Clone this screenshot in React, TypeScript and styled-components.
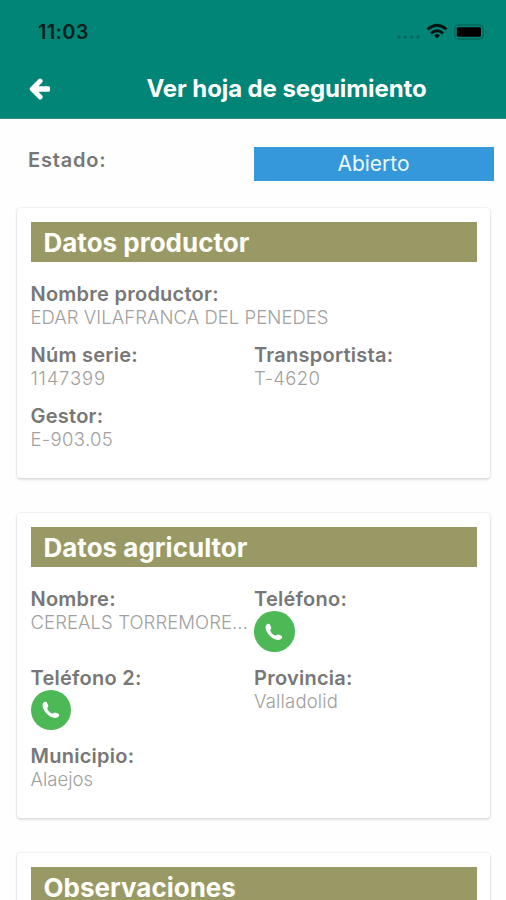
import React from "react";
import styled, { createGlobalStyle } from "styled-components";

const GlobalStyle = createGlobalStyle`
  * { box-sizing: border-box; }
  html, body { margin: 0; background: #fefefe; }
  body { font-family: Inter, "Liberation Sans", sans-serif; height: 900px; overflow: hidden; }
`;

const Screen = styled.div`
  width: 506px;
  height: 900px;
  overflow: hidden;
  background: #fefefe;
`;

const Header = styled.header`
  height: 118.5px;
  background: #018577;
  border-bottom: 1px solid #35897f;
`;

const StatusBar = styled.div`
  display: flex;
  align-items: center;
  justify-content: space-between;
  height: 60px;
  padding: 3px 18px 0 38px;
`;

const Clock = styled.span`
  color: #04201d;
  font-size: 20px;
  font-weight: 600;
  letter-spacing: 0.3px;
`;

const StatusIcons = styled.svg`
  display: block;
  width: 92px;
  height: 20px;
`;

const NavBar = styled.div`
  display: grid;
  grid-template-columns: 68px 1fr;
  align-items: center;
  height: 57px;
`;

const BackIcon = styled.svg`
  display: block;
  width: 22px;
  height: 22px;
  margin-left: 29px;
`;

const Title = styled.h1`
  margin: 0;
  padding-left: 78.5px;
  color: #fff;
  font-size: 24px;
  font-weight: 700;
  line-height: 30px;
  letter-spacing: -0.1px;
  white-space: nowrap;
`;

const StateRow = styled.div`
  display: grid;
  grid-template-columns: 225.5px 240px;
  padding: 28px 0 0 28px;
  height: 89px;
`;

const StateLabel = styled.div`
  color: #777;
  font-size: 20px;
  font-weight: 600;
  line-height: 26px;
  letter-spacing: 0.8px;
`;

const StateBadge = styled.div`
  height: 34px;
  background: #3498db;
  color: #eef8ff;
  font-size: 21px;
  line-height: 34px;
  text-align: center;
`;

const Card = styled.section`
  width: 473px;
  margin: 0 0 35px 17px;
  padding: 14px 13px 13.5px 13.5px;
  background: #fff;
  border-radius: 3px;
  box-shadow: 0 0 2px rgba(0, 0, 0, 0.18), 0 2px 3px rgba(0, 0, 0, 0.1);
`;

const CardTitle = styled.h2`
  height: 40.5px;
  margin: 0 0 20px;
  padding-left: 13px;
  background: #999966;
  color: #fffffa;
  font-size: 26px;
  font-weight: 700;
  line-height: 41px;
`;

const Fields = styled.div`
  display: grid;
  grid-template-columns: 223.5px 1fr;
`;

const FieldBox = styled.div<{ $wide?: boolean }>`
  grid-column: ${(p) => (p.$wide ? "1 / -1" : "auto")};
  min-width: 0;
  padding-bottom: 13.75px;
`;

const FieldLabel = styled.div`
  color: #777;
  font-size: 20px;
  font-weight: 600;
  line-height: 24px;
  letter-spacing: 0.25px;
  white-space: nowrap;
`;

const FieldValue = styled.div<{ $spacing?: number }>`
  color: #a0a0a0;
  font-size: 18.5px;
  font-weight: 300;
  line-height: 23px;
  letter-spacing: ${(p) => p.$spacing ?? 0}px;
  white-space: nowrap;
`;

const CallButton = styled.button`
  display: flex;
  align-items: center;
  justify-content: center;
  width: 40.5px;
  height: 40.5px;
  padding: 0;
  border: 0;
  border-radius: 50%;
  background: #4db856;
`;

type FieldProps = {
  label: string;
  value?: string;
  valueSpacing?: number;
  wide?: boolean;
};

function Field({ label, value, valueSpacing, wide }: FieldProps) {
  return (
    <FieldBox $wide={wide}>
      <FieldLabel>{label}</FieldLabel>
      {value ? (
        <FieldValue $spacing={valueSpacing}>{value}</FieldValue>
      ) : (
        <CallButton aria-label="Llamar">
          <svg width="18" height="18" viewBox="0 0 18 18">
            <path
              d="M1.4 1.8C3 .3 4.4.3 5.3 2.2L6.3 4.8C6.6 5.8 5.2 6.5 5.2 7.4C5.8 9.5 8.4 12.1 10.4 12.5C11.5 12.6 12 11.2 13.1 11.5L15.9 12.5C17.7 13.3 17.5 14.7 16.1 16.1C12.6 18.5 7.6 15.7 4.8 12.8C1.8 9.8-.8 5 1.4 1.8Z"
              fill="#fff"
            />
          </svg>
        </CallButton>
      )}
    </FieldBox>
  );
}

export default function App() {
  return (
    <Screen>
      <GlobalStyle />
      <Header>
        <StatusBar>
          <Clock>11:03</Clock>
          <StatusIcons viewBox="0 0 92 20">
            <g fill="#00675d">
              <circle cx="3" cy="15" r="1.7" />
              <circle cx="9.2" cy="15" r="1.7" />
              <circle cx="15.7" cy="15" r="1.7" />
              <circle cx="22" cy="15" r="1.7" />
            </g>
            <g fill="none" stroke="#001512" strokeWidth="2.9">
              <path d="M31.5 7.5Q41 -.8 50.5 7.5" />
              <path d="M35 11.3Q41 6 47 11.3" />
            </g>
            <path d="M38.1 13.4Q41 10.8 43.9 13.4L41 16.5Z" fill="#001512" />
            <rect x="58.6" y="3" width="28.6" height="14" rx="4" fill="none" stroke="#00685d" strokeWidth="1.3" />
            <rect x="60.8" y="5.2" width="24.2" height="9.6" rx="1.4" fill="#000" />
            <path d="M89 7.7Q92 10 89 12.3Z" fill="#00594f" />
          </StatusIcons>
        </StatusBar>
        <NavBar>
          <BackIcon viewBox="0 0 22 22">
            <path d="M11.2 3L3.2 11L11.2 19" fill="none" stroke="#fff" strokeWidth="4.8" strokeLinecap="round" strokeLinejoin="round" />
            <path d="M3.5 11L10 5V17Z" fill="#fff" />
            <rect x="4" y="8.2" width="17" height="5.6" rx="1.4" fill="#fff" />
          </BackIcon>
          <Title>Ver hoja de seguimiento</Title>
        </NavBar>
      </Header>
      <StateRow>
        <StateLabel>Estado:</StateLabel>
        <StateBadge>Abierto</StateBadge>
      </StateRow>
      <Card>
        <CardTitle>Datos productor</CardTitle>
        <Fields>
          <Field wide label="Nombre productor:" value="EDAR VILAFRANCA DEL PENEDES" valueSpacing={0.04} />
          <Field label="Núm serie:" value="1147399" valueSpacing={0.8} />
          <Field label="Transportista:" value="T-4620" valueSpacing={0.3} />
          <Field label="Gestor:" value="E-903.05" valueSpacing={0.35} />
        </Fields>
      </Card>
      <Card>
        <CardTitle>Datos agricultor</CardTitle>
        <Fields>
          <Field label="Nombre:" value="CEREALS TORREMORE..." valueSpacing={0.08} />
          <Field label="Teléfono:" />
          <Field label="Teléfono 2:" />
          <Field label="Provincia:" value="Valladolid" valueSpacing={0.18} />
          <Field label="Municipio:" value="Alaejos" />
        </Fields>
      </Card>
      <Card>
        <CardTitle>Observaciones</CardTitle>
      </Card>
    </Screen>
  );
}
